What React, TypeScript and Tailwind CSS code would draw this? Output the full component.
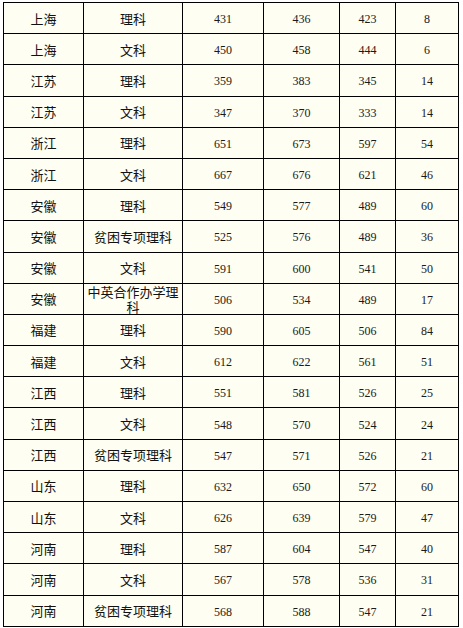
const ROWS: [string, string, number, number, number, number][] = [
  ['上海', '理科', 431, 436, 423, 8],
  ['上海', '文科', 450, 458, 444, 6],
  ['江苏', '理科', 359, 383, 345, 14],
  ['江苏', '文科', 347, 370, 333, 14],
  ['浙江', '理科', 651, 673, 597, 54],
  ['浙江', '文科', 667, 676, 621, 46],
  ['安徽', '理科', 549, 577, 489, 60],
  ['安徽', '贫困专项理科', 525, 576, 489, 36],
  ['安徽', '文科', 591, 600, 541, 50],
  ['安徽', '中英合作办学理科', 506, 534, 489, 17],
  ['福建', '理科', 590, 605, 506, 84],
  ['福建', '文科', 612, 622, 561, 51],
  ['江西', '理科', 551, 581, 526, 25],
  ['江西', '文科', 548, 570, 524, 24],
  ['江西', '贫困专项理科', 547, 571, 526, 21],
  ['山东', '理科', 632, 650, 572, 60],
  ['山东', '文科', 626, 639, 579, 47],
  ['河南', '理科', 587, 604, 547, 40],
  ['河南', '文科', 567, 578, 536, 31],
  ['河南', '贫困专项理科', 568, 588, 547, 21],
];

const CJK = "font-['Noto_Sans_CJK_SC',sans-serif] text-[13px] leading-[15px] text-[#111]";
const NUM = "font-['Liberation_Serif',serif] text-[12px] text-[#1a1a1a]";

export default function App() {
  return (
    <div className="min-h-screen bg-white pt-[2px] pl-[3px]">
      {/* score table */}
      <div className="grid w-fit grid-cols-[80px_99px_81px_76px_56px_63px] auto-rows-[31.2px] border-l border-t border-black bg-[#fefef2]">
        {ROWS.map((r, i) => (
          <div key={i} className="contents">
            <div className={`flex items-center justify-center border-r border-b border-black ${CJK}`}>{r[0]}</div>
            <div className={`flex items-center justify-center border-r border-b border-black px-[2px] text-center ${CJK}`}>{r[1]}</div>
            {r.slice(2).map((n, j) => (
              <div key={j} className={`flex items-center justify-center border-r border-b border-black pt-[2px] ${NUM}`}>
                {n}
              </div>
            ))}
          </div>
        ))}
      </div>
    </div>
  );
}
